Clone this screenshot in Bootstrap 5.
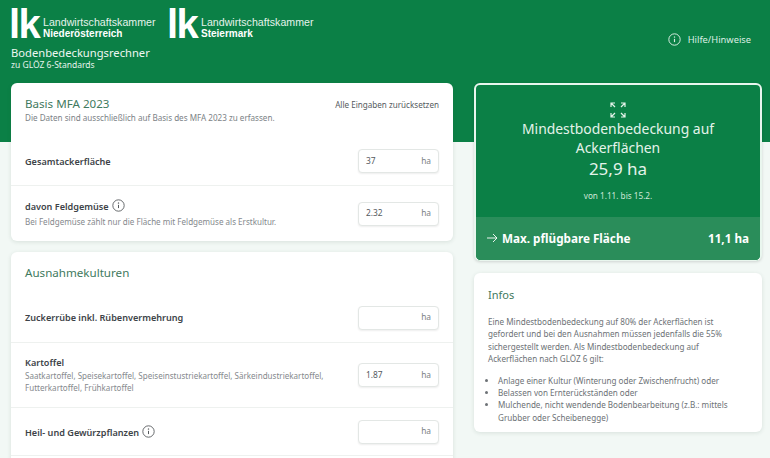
<!DOCTYPE html>
<html lang="de">
<head>
<meta charset="utf-8">
<title>Bodenbedeckungsrechner</title>
<link href="https://cdn.jsdelivr.net/npm/bootstrap@5.3.0/dist/css/bootstrap.min.css" rel="stylesheet">
<style>
html,body{height:458px;overflow:hidden}
body{background:#f2f8f5;font-family:"Noto Sans","Open Sans",sans-serif;color:#3d4348;font-size:9px}
.hero{background:#0b8046;height:142px;color:#e6f3ec;padding:8px 11px 0 11px}
.lk-logo{display:flex;align-items:center;width:158px;height:32px;color:#fff}
.lk-mark{font-family:"Liberation Sans",sans-serif;font-weight:700;font-size:40px;line-height:32px;letter-spacing:-1.5px;width:32px;margin-left:-2px;margin-right:2px}
.lk-text{font-family:"Liberation Sans",sans-serif;font-size:10.6px;line-height:12px;letter-spacing:.03px;padding-top:7px;white-space:nowrap;color:#e6f3ec}
.lk-text b{display:block;color:#fff;font-size:10px;letter-spacing:0}
.app-title{font-size:11.2px;line-height:14px;margin-top:6px;font-weight:400;color:#eef7f2}
.app-sub{font-size:8.5px;line-height:10px;margin-top:0}
.help-link{font-size:9.3px;color:#dcefe4;margin-right:8px;margin-top:25px;gap:7px}
.page-grid{margin-top:-59px;padding:0 8px 0 11px;display:grid;grid-template-columns:442px 288px;column-gap:21px;align-items:start}
.panel{background:#fff;border-radius:6px;box-shadow:0 1px 4px rgba(40,70,55,.13)}
.panel+.panel{margin-top:11px}
.panel-head{padding:13px 14px 0 14px}
.panel-title{font-size:11.6px;line-height:16px;color:#3f7a60;font-weight:400;margin:0}
.panel-note{font-size:8.1px;line-height:11px;color:#7c8286}
.reset-link{font-size:8.1px;color:#555b60;padding-top:3px}
.calc-row{display:flex;align-items:center;justify-content:space-between;padding:0 14px;border-bottom:1px solid #eef1ef}
.calc-row:last-child{border-bottom:0}
.calc-label{font-size:9.1px;font-weight:600;line-height:13px;color:#3d4348}
.calc-note{font-size:8.05px;line-height:11.5px;color:#85898d;margin-top:3px}
.calc-note-tight{margin-top:1px;line-height:12px}
.row-first{margin-top:14px;height:49px}
.row-first-b{margin-top:12px;height:50px}
.row-note{height:55px}
.row-tall{height:65px}
.row-plain{height:48px}
.row-rest{height:30px}
.kart-text{width:310px}
.ha-field{flex:0 0 81px;height:24px;border:1px solid #e3e7e5;border-radius:4px;box-shadow:0 1px 2px rgba(0,0,0,.07);background:#fff;display:flex;align-items:center;justify-content:space-between;padding:0 7px;font-size:8.4px;color:#555b60}
.ha-unit{color:#7c8286}
.info-ic{width:13px;height:13px;vertical-align:-2px;margin-left:1px;color:#55595c}
.result-card{background:#0b8046;border:2px solid #e9f6ee;border-bottom-width:1px;border-radius:6px;color:#e4f3ea;overflow:hidden;box-shadow:0 1px 3px rgba(0,0,0,.15)}
.result-top{height:132px;padding-top:17px;text-align:center}
.result-title{font-size:13.9px;line-height:19px;margin-top:1px}
.result-value{font-size:17px;line-height:23px;margin-top:-.5px}
.result-date{font-size:8.2px;margin-top:10px;color:#cfe8d9}
.result-foot{height:43px;background:#2a8d5a;display:flex;align-items:center;justify-content:space-between;padding:0 11px 0 11px;color:#fff;font-size:11.7px;font-weight:700}
.infos{margin-top:12px;padding:14px 14px 8px 14px;font-size:8.1px;line-height:12.4px;color:#6d7276}
.infos h2{font-size:11px;line-height:16px;color:#3f7a60;font-weight:400;margin:0 0 13px}
.infos p{margin:0 0 9px}
.infos ul{margin:0;padding-left:10px}
</style>
</head>
<body>
<header class="hero d-flex justify-content-between align-items-start">
  <div>
    <div class="d-flex">
      <div class="lk-logo"><span class="lk-mark">lk</span><span class="lk-text">Landwirtschaftskammer<b>Niederösterreich</b></span></div>
      <div class="lk-logo"><span class="lk-mark">lk</span><span class="lk-text">Landwirtschaftskammer<b>Steiermark</b></span></div>
    </div>
    <div class="app-title">Bodenbedeckungsrechner</div>
    <div class="app-sub">zu GLÖZ 6-Standards</div>
  </div>
  <div class="help-link d-flex align-items-center">
    <svg width="13" height="13" viewBox="0 0 16 16" fill="none" stroke="currentColor"><circle cx="8" cy="8" r="7" stroke-width="1.2"/><path d="M8 7.2v4" stroke-width="1.4"/><circle cx="8" cy="5" r=".5" stroke-width="1"/></svg>
    <span>Hilfe/Hinweise</span>
  </div>
</header>
<main class="page-grid">
  <div>
    <section class="panel">
      <div class="panel-head d-flex justify-content-between align-items-start">
        <div>
          <h1 class="panel-title">Basis MFA 2023</h1>
          <div class="panel-note">Die Daten sind ausschließlich auf Basis des MFA 2023 zu erfassen.</div>
        </div>
        <div class="reset-link">Alle Eingaben zurücksetzen</div>
      </div>
      <div class="calc-row row-first">
        <div class="calc-label">Gesamtackerfläche</div>
        <div class="ha-field"><span>37</span><span class="ha-unit">ha</span></div>
      </div>
      <div class="calc-row row-note">
        <div>
          <div class="calc-label">davon Feldgemüse <svg class="info-ic" viewBox="0 0 16 16" fill="none" stroke="currentColor"><circle cx="8" cy="8" r="7" stroke-width="1.1"/><path d="M8 7.2v4" stroke-width="1.3"/><circle cx="8" cy="5" r=".5"/></svg></div>
          <div class="calc-note">Bei Feldgemüse zählt nur die Fläche mit Feldgemüse als Erstkultur.</div>
        </div>
        <div class="ha-field"><span>2.32</span><span class="ha-unit">ha</span></div>
      </div>
    </section>
    <section class="panel">
      <div class="panel-head"><h2 class="panel-title">Ausnahmekulturen</h2></div>
      <div class="calc-row row-first-b">
        <div class="calc-label">Zuckerrübe inkl. Rübenvermehrung</div>
        <div class="ha-field"><span></span><span class="ha-unit">ha</span></div>
      </div>
      <div class="calc-row row-tall">
        <div class="kart-text">
          <div class="calc-label">Kartoffel</div>
          <div class="calc-note calc-note-tight">Saatkartoffel, Speisekartoffel, Speiseinstustriekartoffel, Särkeindustriekartoffel, Futterkartoffel, Frühkartoffel</div>
        </div>
        <div class="ha-field"><span>1.87</span><span class="ha-unit">ha</span></div>
      </div>
      <div class="calc-row row-plain">
        <div class="calc-label">Heil- und Gewürzpflanzen <svg class="info-ic" viewBox="0 0 16 16" fill="none" stroke="currentColor"><circle cx="8" cy="8" r="7" stroke-width="1.1"/><path d="M8 7.2v4" stroke-width="1.3"/><circle cx="8" cy="5" r=".5"/></svg></div>
        <div class="ha-field"><span></span><span class="ha-unit">ha</span></div>
      </div>
      <div class="calc-row row-rest"></div>
    </section>
  </div>
  <aside>
    <section class="result-card">
      <div class="result-top">
        <svg width="16" height="16" viewBox="0 0 16 16" fill="none" stroke="currentColor" stroke-width="1.2"><path d="M1 5V1h4M1 1l4 4M11 1h4v4M15 1l-4 4M1 11v4h4M1 15l4-4M15 11v4h-4M15 15l-4-4"/></svg>
        <div class="result-title">Mindestbodenbedeckung auf<br>Ackerflächen</div>
        <div class="result-value">25,9 ha</div>
        <div class="result-date">von 1.11. bis 15.2.</div>
      </div>
      <div class="result-foot">
        <span class="d-flex align-items-center gap-1"><svg width="11" height="10" viewBox="0 0 11 10" fill="none" stroke="currentColor" stroke-width=".9"><path d="M0 5h10M6 1l4 4-4 4"/></svg>Max. pflügbare Fläche</span>
        <span>11,1 ha</span>
      </div>
    </section>
    <section class="panel infos">
      <h2>Infos</h2>
      <p>Eine Mindestbodenbedeckung auf 80% der Ackerflächen ist gefordert und bei den Ausnahmen müssen jedenfalls die 55% sichergestellt werden. Als Mindestbodenbedeckung auf Ackerflächen nach GLÖZ 6 gilt:</p>
      <ul>
        <li>Anlage einer Kultur (Winterung oder Zwischenfrucht) oder</li>
        <li>Belassen von Ernterückständen oder</li>
        <li>Mulchende, nicht wendende Bodenbearbeitung (z.B.: mittels Grubber oder Scheibenegge)</li>
      </ul>
    </section>
  </aside>
</main>
<script src="https://cdn.jsdelivr.net/npm/bootstrap@5.3.0/dist/js/bootstrap.bundle.min.js"></script>
</body>
</html>
